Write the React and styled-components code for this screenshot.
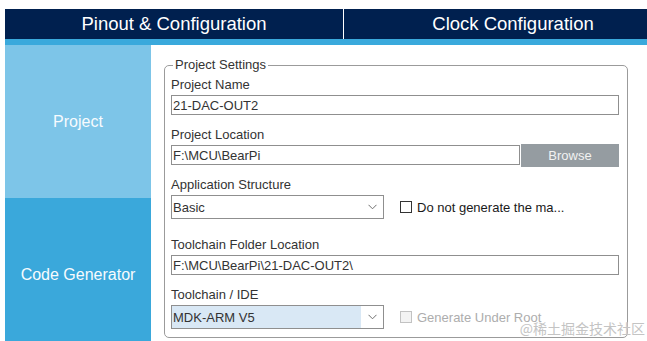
import React from 'react';
import styled, { createGlobalStyle } from 'styled-components';

const GlobalStyle = createGlobalStyle`
  html, body {
    margin: 0;
    padding: 0;
    background: #ffffff;
  }
  body {
    font-family: 'Liberation Sans', Arial, sans-serif;
  }
`;

const Page = styled.div`
  position: relative;
  height: 100vh;
  overflow: hidden;
  padding: 9px 0 0 5px;
  box-sizing: border-box;
`;

const TopBar = styled.div`
  display: flex;
  height: 30px;
  background: #00204f;
`;

const Tab = styled.div`
  flex: 0 0 338px;
  display: flex;
  align-items: center;
  justify-content: center;
  color: #ffffff;
  font-size: 18.5px;
  border-left: ${({ $divider }) => ($divider ? '1px solid #ffffff' : 'none')};
`;

const Strip = styled.div`
  height: 6px;
  background: #3aa9dc;
`;

const Main = styled.div`
  display: flex;
`;

const Sidebar = styled.nav`
  flex: 0 0 146px;
  display: flex;
  flex-direction: column;
`;

const SideItem = styled.div`
  height: 153px;
  display: flex;
  align-items: center;
  justify-content: center;
  background: ${({ $active }) => ($active ? '#7dc5e8' : '#3aa8db')};
  color: #f7fbfe;
  font-size: 16px;
`;

const Content = styled.div`
  flex: 1;
  padding: 12px 0 0 13px;
`;

const Group = styled.fieldset`
  width: 464px;
  box-sizing: border-box;
  margin: 0;
  padding: 0 8px 8px 6px;
  border: 1px solid #9b9b9b;
  border-radius: 5px;
`;

const Legend = styled.legend`
  margin-left: 2px;
  padding: 0 2px;
  font-size: 13px;
  line-height: 16px;
  color: #333333;
`;

const Label = styled.div`
  margin-top: ${({ $gap }) => $gap}px;
  margin-bottom: 2px;
  font-size: 13px;
  line-height: 16px;
  color: #333333;
`;

const TextBox = styled.div`
  flex: 1;
  height: 20px;
  box-sizing: border-box;
  border: 1px solid #8f8f8f;
  padding-left: 1px;
  display: flex;
  align-items: center;
  font-size: 13px;
  color: #333333;
  white-space: nowrap;
  overflow: hidden;
`;

const Row = styled.div`
  display: flex;
  align-items: center;
  gap: ${({ $gap }) => $gap || 0}px;
`;

const BrowseButton = styled.div`
  flex: 0 0 98px;
  height: 23px;
  margin: -1px 0 -2px;
  background: #959ca1;
  color: #f2f2f2;
  font-size: 13px;
  display: flex;
  align-items: center;
  justify-content: center;
`;

const Select = styled.div`
  flex: 0 0 213px;
  height: 24px;
  box-sizing: border-box;
  border: 1px solid #8f8f8f;
  display: flex;
  background: #ffffff;
`;

const SelectValue = styled.div`
  flex: 1;
  display: flex;
  align-items: center;
  padding-left: 1px;
  font-size: 13px;
  color: #333333;
  background: ${({ $highlight }) => ($highlight ? '#d9e8f5' : 'transparent')};
`;

const SelectArrow = styled.div`
  flex: 0 0 22px;
  display: flex;
  align-items: center;
  justify-content: center;
`;

const Check = styled.label`
  display: flex;
  align-items: center;
  gap: 5px;
  margin-left: 16px;
  font-size: 13px;
  color: ${({ $disabled }) => ($disabled ? '#adadad' : '#1a1a1a')};
`;

const Box = styled.span`
  width: 12px;
  height: 12px;
  box-sizing: border-box;
  border: 1px solid ${({ $disabled }) => ($disabled ? '#c2c2c2' : '#333333')};
  background: ${({ $disabled }) => ($disabled ? '#f3f3f3' : '#ffffff')};
`;

const Watermark = styled.div`
  position: absolute;
  right: 2px;
  bottom: 3px;
  font-family: 'Noto Sans CJK SC', sans-serif;
  font-size: 14px;
  color: #c4c4c4;
  text-shadow: 0 0 1px #ffffff;
`;

const Chevron = () => (
  <svg width="9" height="6" viewBox="0 0 9 6">
    <polyline points="0.5,0.8 4.5,4.8 8.5,0.8" fill="none" stroke="#6f6f6f" strokeWidth="1" />
  </svg>
);

const Dropdown = ({ value, highlight }) => (
  <Select>
    <SelectValue $highlight={highlight}>{value}</SelectValue>
    <SelectArrow>
      <Chevron />
    </SelectArrow>
  </Select>
);

const App = () => (
  <Page>
    <GlobalStyle />
    <TopBar>
      <Tab>Pinout &amp; Configuration</Tab>
      <Tab $divider>Clock Configuration</Tab>
    </TopBar>
    <Strip />
    <Main>
      <Sidebar>
        <SideItem $active>Project</SideItem>
        <SideItem>Code Generator</SideItem>
      </Sidebar>
      <Content>
        <Group>
          <Legend>Project Settings</Legend>

          <Label $gap={4}>Project Name</Label>
          <Row>
            <TextBox>21-DAC-OUT2</TextBox>
          </Row>

          <Label $gap={12}>Project Location</Label>
          <Row $gap={1}>
            <TextBox>F:\MCU\BearPi</TextBox>
            <BrowseButton>Browse</BrowseButton>
          </Row>

          <Label $gap={12}>Application Structure</Label>
          <Row>
            <Dropdown value="Basic" />
            <Check>
              <Box />
              Do not generate the ma...
            </Check>
          </Row>

          <Label $gap={18}>Toolchain Folder Location</Label>
          <Row>
            <TextBox>F:\MCU\BearPi\21-DAC-OUT2\</TextBox>
          </Row>

          <Label $gap={12}>Toolchain / IDE</Label>
          <Row>
            <Dropdown value="MDK-ARM V5" highlight />
            <Check $disabled>
              <Box $disabled />
              Generate Under Root
            </Check>
          </Row>
        </Group>
      </Content>
    </Main>
    <Watermark>@稀土掘金技术社区</Watermark>
  </Page>
);

export default App;
